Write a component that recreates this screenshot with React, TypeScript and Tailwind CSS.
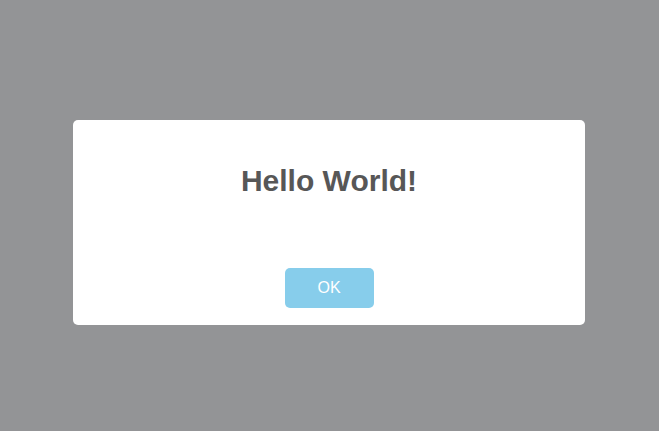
export default function App() {
  return (
    <div
      className="w-full h-[431px] bg-[#939496] flex justify-center pt-[120px] pr-[1px]"
      style={{ fontFamily: '"Liberation Sans", Arial, sans-serif' }}
    >
      <div className="w-[512px] h-[205px] bg-white rounded-[5px] flex flex-col items-center pt-[43px]">
        <h2 className="text-[30px] leading-[36px] font-bold text-[#575757]">Hello World!</h2>
        <button className="mt-[69px] w-[89px] h-[40px] rounded-[5px] bg-[#87CDEB] text-white text-[16px] leading-[40px]">
          OK
        </button>
      </div>
    </div>
  );
}
